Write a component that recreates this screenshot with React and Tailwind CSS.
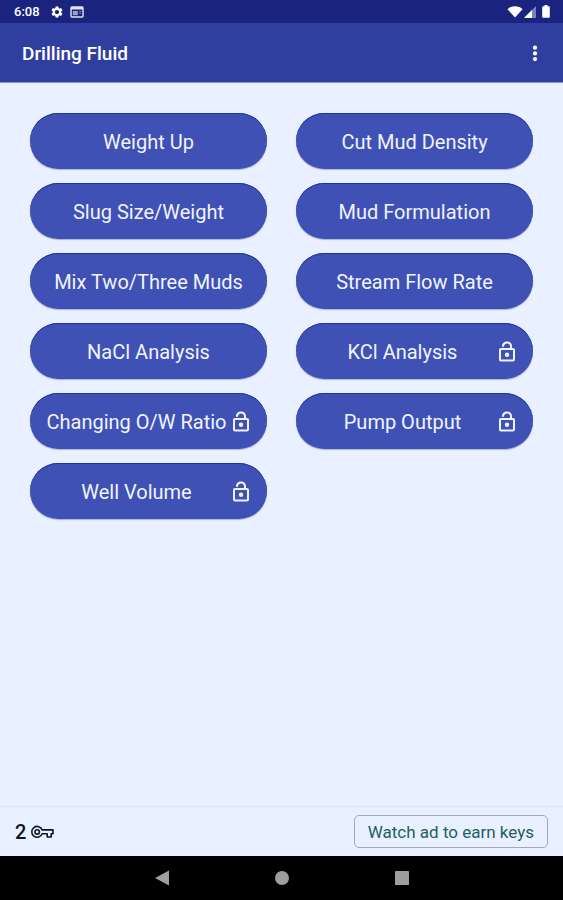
const calculators = [
    { name: "Weight Up" },
    { name: "Cut Mud Density" },
    { name: "Slug Size/Weight" },
    { name: "Mud Formulation" },
    { name: "Mix Two/Three Muds" },
    { name: "Stream Flow Rate" },
    { name: "NaCl Analysis" },
    { name: "KCl Analysis", needsKey: true },
    { name: "Changing O/W Ratio", needsKey: true },
    { name: "Pump Output", needsKey: true },
    { name: "Well Volume", needsKey: true },
];

function LockIcon() {
    return (
        <svg viewBox="0 0 24 24" className="size-6 shrink-0 fill-current" aria-hidden="true">
            <path d="M18 8h-1V6c0-2.600-2.200-4.600-5-4.600S7 3.400 7 6v.8h2c0-2 1.200-3.400 3-3.400s3 1.300 3 2.900V8H6c-1.100 0-2 .9-2 2v9.500c0 1.100.9 2 2 2h12c1.100 0 2-.9 2-2V10c0-1.100-.9-2-2-2zm0 11.500H6V10h12v9.500z" />
            <circle cx="12" cy="14.700" r="2.200" />
        </svg>
    );
}

function KeyIcon() {
    return (
        <svg
            viewBox="0 0 24 16"
            className="h-4 w-6 fill-none stroke-[#14161f]"
            strokeWidth="1.6"
            strokeLinejoin="round"
            aria-hidden="true"
        >
            <path d="M12.200 5.900H23V9.800H21.200V13H17.200V9.800H12.200A5.400 5.400 0 1 1 12.200 5.900Z" />
            <circle cx="7.200" cy="7.900" r="2.200" />
        </svg>
    );
}

function StatusBar() {
    return (
        <div className="flex h-[23px] items-center bg-[#1a237e] pr-[13px] pl-[14px] text-white">
            <span className="text-[13px] leading-4 font-medium">6:08</span>

            <svg viewBox="0 0 24 24" className="ml-[10px] size-[14px] fill-current" aria-hidden="true">
                <path d="M19.14 12.94c.04-.3.06-.61.06-.94 0-.32-.02-.64-.07-.94l2.03-1.58c.18-.14.23-.41.12-.61l-1.92-3.32c-.12-.22-.37-.29-.59-.22l-2.39.96c-.5-.38-1.03-.7-1.62-.94l-.36-2.54c-.04-.24-.24-.41-.48-.41h-3.84c-.24 0-.43.17-.47.41l-.36 2.54c-.59.24-1.13.57-1.62.94l-2.39-.96c-.22-.08-.47 0-.59.22L2.74 8.87c-.12.21-.08.47.12.61l2.03 1.58c-.05.3-.09.63-.09.94s.02.64.07.94l-2.03 1.58c-.18.14-.23.41-.12.61l1.92 3.32c.12.22.37.29.59.22l2.39-.96c.5.38 1.03.7 1.62.94l.36 2.54c.05.24.24.41.48.41h3.84c.24 0 .44-.17.47-.41l.36-2.54c.59-.24 1.13-.56 1.62-.94l2.39.96c.22.08.47 0 .59-.22l1.92-3.32c.12-.22.07-.47-.12-.61l-2.01-1.58zM12 15.6c-1.98 0-3.6-1.62-3.6-3.6s1.62-3.6 3.6-3.6 3.6 1.62 3.6 3.6-1.62 3.6-3.6 3.6z" />
            </svg>

            <svg viewBox="0 0 14 12" className="ml-[6px] h-3 w-[14px]" aria-hidden="true">
                <rect x="1" y="1" width="12" height="10" rx="1" fill="none" stroke="#e3e4f1" strokeWidth="1.4" />
                <rect x="1" y="1" width="12" height="2.5" fill="#e3e4f1" />
                <rect x="2.8" y="5" width="5" height="4.2" fill="#9da1ca" />
                <path d="M9.2 5.5h2M9.2 7.2h2" stroke="#9da1ca" strokeWidth="0.8" />
            </svg>

            <div className="ml-auto flex items-center">
                <svg viewBox="0 0 16 12" className="h-3 w-4 fill-current" aria-hidden="true">
                    <path d="M8 11.500 0.500 3.200C4.500-.6 11.500-.6 15.500 3.200Z" />
                </svg>
                <svg viewBox="0 0 12 12" className="ml-px size-3" aria-hidden="true">
                    <path d="M12 0v12H0Z" fill="#7c81b8" />
                    <path d="M8 4v8H0Z" fill="#fff" />
                </svg>
                <svg viewBox="0 0 8 13" className="ml-[6px] h-[13px] w-2 fill-current" aria-hidden="true">
                    <path d="M2.5 0h3v1.3H7a.8.8 0 0 1 .8.8V12a.8.8 0 0 1-.8.8H1a.8.8 0 0 1-.8-.8V2.1A.8.8 0 0 1 1 1.3h1.5Z" />
                </svg>
            </div>
        </div>
    );
}

function CalculatorButton({ name, needsKey }) {
    return (
        <button className="flex h-14 items-center rounded-full bg-[#3f51b5] px-[14px] pt-px text-xl text-[#f1f4ff] shadow-[inset_0_1px_0_#1c34a2,0_1px_1px_#a9b2dd]">
            <span className="flex-1 text-center whitespace-nowrap">{name}</span>
            {needsKey && <LockIcon />}
        </button>
    );
}

function App() {
    return (
        <div className="flex min-h-screen flex-col bg-[#e9f0ff] font-[Roboto,sans-serif]">
            <StatusBar />

            {/* APP BAR */}
            <header className="flex h-[60px] items-center justify-between border-b border-[#8c95cc] bg-[#303f9f] pt-[2px] pr-[19px] pl-[22px] text-white">
                <h1 className="text-[19px] leading-6 font-medium">Drilling Fluid</h1>

                <button aria-label="More options" className="p-1">
                    <svg viewBox="0 0 10 18" className="h-[18px] w-[10px] fill-current" aria-hidden="true">
                        <circle cx="5" cy="2.700" r="2.1" />
                        <circle cx="5" cy="8.400" r="2.1" />
                        <circle cx="5" cy="14.100" r="2.1" />
                    </svg>
                </button>
            </header>

            {/* CALCULATORS */}
            <main className="flex-1 p-[30px]">
                <div className="grid grid-cols-2 gap-x-[29px] gap-y-[14px]">
                    {calculators.map((calc) => (
                        <CalculatorButton key={calc.name} {...calc} />
                    ))}
                </div>
            </main>

            {/* KEYS */}
            <footer className="flex h-[50px] items-center justify-between border-t border-[#dde3f2] px-[15px]">
                <div className="flex items-center gap-1 text-[#14161f]">
                    <span className="text-xl font-medium">2</span>
                    <KeyIcon />
                </div>

                <button className="h-[33px] rounded-[5px] border border-[#a3a9bb] px-[13px] text-[17px] leading-6 text-[#22605f]">
                    Watch ad to earn keys
                </button>
            </footer>

            {/* SYSTEM NAVIGATION */}
            <nav className="flex h-11 items-center justify-center gap-[104px] bg-black">
                <button aria-label="Back">
                    <svg viewBox="0 0 16 16" className="size-4 fill-[#9e9e9e]" aria-hidden="true">
                        <path d="M15 .5v15L1 8Z" />
                    </svg>
                </button>
                <button aria-label="Home">
                    <svg viewBox="0 0 16 16" className="size-4 fill-[#9e9e9e]" aria-hidden="true">
                        <circle cx="8" cy="8" r="7" />
                    </svg>
                </button>
                <button aria-label="Recent apps">
                    <svg viewBox="0 0 16 16" className="size-4 fill-[#9e9e9e]" aria-hidden="true">
                        <rect x="1" y="1" width="14" height="14" rx="0.5" />
                    </svg>
                </button>
            </nav>
        </div>
    );
}

export default App;
